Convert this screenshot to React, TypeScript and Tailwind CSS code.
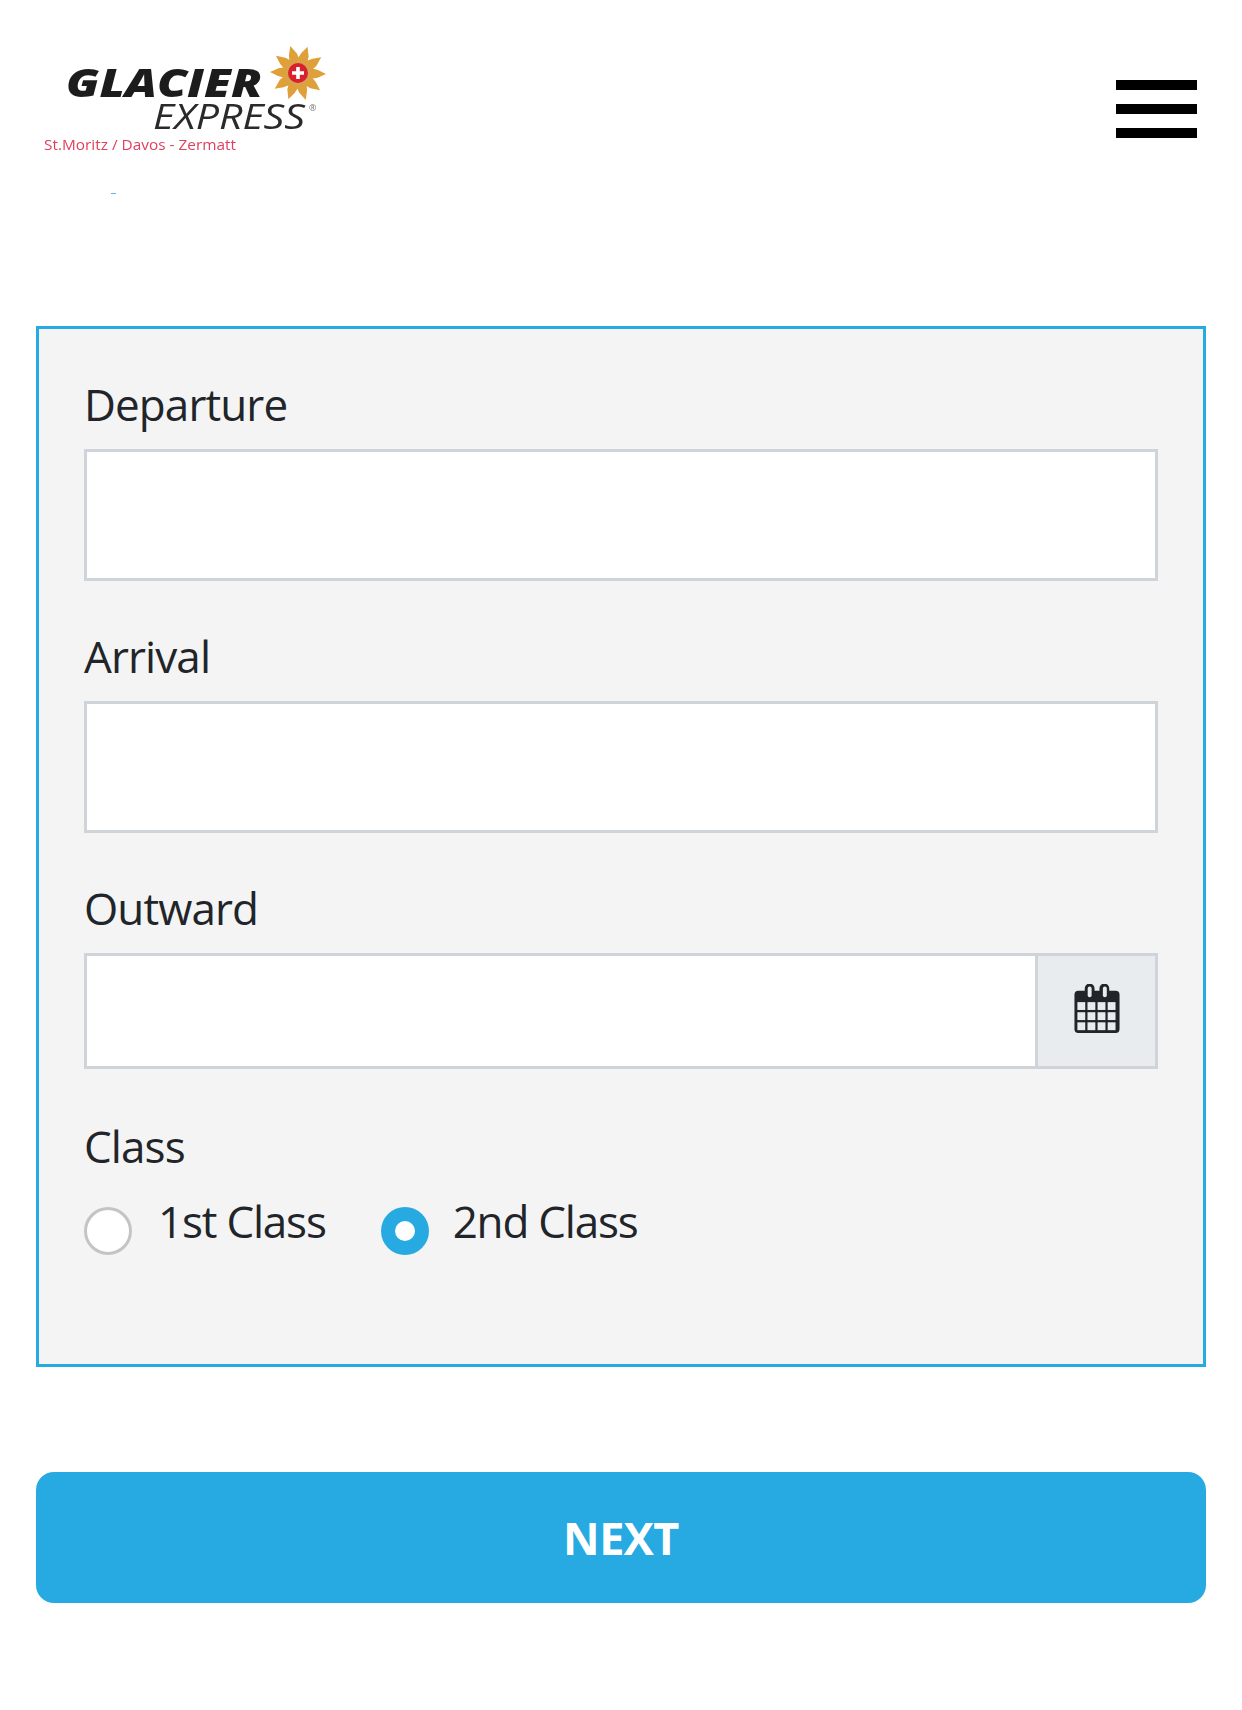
import React from 'react';

const Logo = () => (
  <svg width="300" height="160" viewBox="0 0 300 160">
    <g className="blur-[0.7px]">
      <text x="23" y="52" fontFamily="'Open Sans', sans-serif" fontWeight="800" fontStyle="italic" fontSize="38" fill="#1c1c1c" textLength="196" lengthAdjust="spacingAndGlyphs">GLACIER</text>
      <text x="110" y="84" fontFamily="'Open Sans', sans-serif" fontWeight="400" fontStyle="italic" fontSize="34" fill="#2a2a2a" textLength="152" lengthAdjust="spacingAndGlyphs">EXPRESS</text>
      <text x="266" y="66" fontFamily="'Open Sans', sans-serif" fontSize="9" fill="#777">®</text>
      <text x="1" y="105" fontFamily="'Open Sans', sans-serif" fontSize="14" fill="#e0405c" textLength="192" lengthAdjust="spacingAndGlyphs">St.Moritz / Davos - Zermatt</text>
      <g transform="translate(255 28)">
        {[18, 54, 90, 126, 162, 198, 234, 270, 306, 342].map((a) => (
          <path key={a} d="M-6 -9 L-3 -20 L1 -28 L5 -19 L6 -9 Z" fill="#dfa03a" transform={`rotate(${a})`} />
        ))}
        <circle r="13" fill="#d9a24a" />
        <circle r="10" fill="#d8202f" />
        <path d="M-1.800 -6 H1.800 V-1.800 H6 V1.800 H1.800 V6 H-1.800 V1.800 H-6 V-1.800 H-1.800 Z" fill="#fff" />
      </g>
    </g>
    <rect x="68" y="148" width="5" height="1" fill="#5bb8ea" />
  </svg>
);

const Label = ({ text }: { text: string }) => (
  <label className="h-[65px] pb-6 text-[44px] leading-[41px] tracking-[-0.9px] text-[#212529]">{text}</label>
);

const Field = ({ label }: { label: string }) => (
  <div className="flex flex-col">
    <Label text={label} />
    <input className="h-[132px] w-full border-[3px] border-[#ced4da] bg-white outline-none" />
  </div>
);

const CalendarIcon = () => (
  <svg width="46" height="49" viewBox="0 0 46 50">
    <path fillRule="evenodd" fill="#212529" d="M4 7h6.500V4.500a5 5 0 0 1 10 0V7h5V4.500a5 5 0 0 1 10 0V7H42a4 4 0 0 1 4 4v35a4 4 0 0 1-4 4H4a4 4 0 0 1-4-4V11a4 4 0 0 1 4-4z" />
    <rect x="13.500" y="2.500" width="4" height="11" rx="2" fill="#e9ecef" />
    <rect x="29" y="2.500" width="4" height="11" rx="2" fill="#e9ecef" />
    {[0, 1, 2].map((r) =>
      [0, 1, 2, 3].map((c) => (
        <rect key={`${r}-${c}`} x={3 + c * 10.300} y={18.500 + r * 10.300} width="8" height="8" fill="#e9ecef" />
      ))
    )}
  </svg>
);

export default function App() {
  return (
    <div className="h-[1710px] w-[1242px] bg-white px-9 font-['Open_Sans',sans-serif]">
      <header className="flex h-[326px] items-start justify-between">
        <div className="pt-[45px] pl-[7px]"><Logo /></div>
        <div className="mt-[80px] mr-[9px] flex w-[81px] flex-col gap-[14px]">
          <div className="h-[10px] bg-black" />
          <div className="h-[10px] bg-black" />
          <div className="h-[10px] bg-black" />
        </div>
      </header>

      <form className="flex h-[1041px] flex-col border-[3px] border-[#27aae1] bg-[#f4f4f4] px-[45px] pt-[55px]">
        <Field label="Departure" />
        <div className="mt-[55px]"><Field label="Arrival" /></div>
        <div className="mt-[55px] flex flex-col">
          <Label text="Outward" />
          <div className="flex h-[116px]">
            <input className="min-w-0 flex-1 border-[3px] border-r-0 border-[#ced4da] bg-white outline-none" />
            <div className="flex w-[123px] items-center justify-center border-[3px] border-[#ced4da] bg-[#e9ecef] pb-[5px]">
              <CalendarIcon />
            </div>
          </div>
        </div>
        <label className="mt-[45px] h-[65px] text-[44px] leading-[65px] tracking-[-0.9px] text-[#212529]">Class</label>
        <div className="mt-[17px] flex items-start">
          <span className="mt-[11px] h-[48px] w-[48px] rounded-full border-[3px] border-[#c4c4c4] bg-white" />
          <span className="ml-[26px] text-[44px] leading-[50px] tracking-[-1.2px] text-[#212529]">1st Class</span>
          <span className="mt-[11px] ml-[55px] flex h-[48px] w-[48px] items-center justify-center rounded-full bg-[#27aae1]">
            <span className="h-[20px] w-[20px] rounded-full bg-white" />
          </span>
          <span className="ml-[24px] text-[44px] leading-[50px] tracking-[-1.2px] text-[#212529]">2nd Class</span>
        </div>
      </form>

      <button className="mt-[105px] flex h-[131px] w-full items-center justify-center rounded-[18px] bg-[#27aae1] text-[45px] font-bold tracking-[-0.5px] text-white">
        NEXT
      </button>
    </div>
  );
}
